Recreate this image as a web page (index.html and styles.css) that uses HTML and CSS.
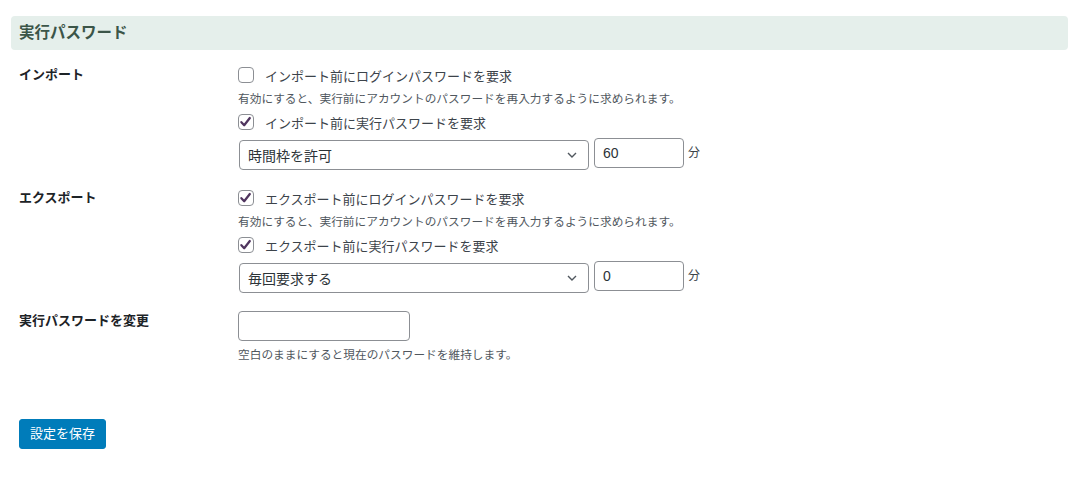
FILE: index.html
```html
<!DOCTYPE html>
<html lang="ja">
<head>
<meta charset="utf-8">
<link rel="stylesheet" href="styles.css">
</head>
<body>
<div class="page">
  <h2 class="section-title">実行パスワード</h2>

  <div class="form-row first">
    <div class="label">インポート</div>
    <div class="field">
      <div class="check-line">
        <span class="cb"></span>
        <span class="cb-text">インポート前にログインパスワードを要求</span>
      </div>
      <div class="help">有効にすると、実行前にアカウントのパスワードを再入力するように求められます。</div>
      <div class="check-line">
        <span class="cb checked"><svg viewBox="0 0 16 16" width="16" height="16"><path d="M3.6 8.2 L6.6 11.4 L12.6 3.8" fill="none" stroke="#50355f" stroke-width="2.4" stroke-linecap="round" stroke-linejoin="round"/></svg></span>
        <span class="cb-text">インポート前に実行パスワードを要求</span>
      </div>
      <div class="select-row">
        <div class="select"><span>時間枠を許可</span><svg viewBox="0 0 16 16" width="16" height="16"><path d="M4 6 L8 10 L12 6" fill="none" stroke="#50575e" stroke-width="1.4"/></svg></div>
        <div class="num">60</div>
        <span class="unit">分</span>
      </div>
    </div>
  </div>

  <div class="form-row">
    <div class="label">エクスポート</div>
    <div class="field">
      <div class="check-line">
        <span class="cb checked"><svg viewBox="0 0 16 16" width="16" height="16"><path d="M3.6 8.2 L6.6 11.4 L12.6 3.8" fill="none" stroke="#50355f" stroke-width="2.4" stroke-linecap="round" stroke-linejoin="round"/></svg></span>
        <span class="cb-text">エクスポート前にログインパスワードを要求</span>
      </div>
      <div class="help">有効にすると、実行前にアカウントのパスワードを再入力するように求められます。</div>
      <div class="check-line">
        <span class="cb checked"><svg viewBox="0 0 16 16" width="16" height="16"><path d="M3.6 8.2 L6.6 11.4 L12.6 3.8" fill="none" stroke="#50355f" stroke-width="2.4" stroke-linecap="round" stroke-linejoin="round"/></svg></span>
        <span class="cb-text">エクスポート前に実行パスワードを要求</span>
      </div>
      <div class="select-row">
        <div class="select"><span>毎回要求する</span><svg viewBox="0 0 16 16" width="16" height="16"><path d="M4 6 L8 10 L12 6" fill="none" stroke="#50575e" stroke-width="1.4"/></svg></div>
        <div class="num">0</div>
        <span class="unit">分</span>
      </div>
    </div>
  </div>

  <div class="form-row">
    <div class="label">実行パスワードを変更</div>
    <div class="field">
      <div class="text-input"></div>
      <div class="help help-after">空白のままにすると現在のパスワードを維持します。</div>
    </div>
  </div>

  <div class="actions">
    <button class="btn">設定を保存</button>
  </div>
</div>
</body>
</html>
```

FILE: styles.css
```css
* { box-sizing: border-box; }
body {
  margin: 0;
  background: #fff;
  font-family: "Liberation Sans", "Noto Sans CJK JP", sans-serif;
  color: #1d2327;
}
.page {
  padding: 16px 11px 0 11px;
}
.section-title {
  margin: 0;
  height: 34px;
  background: #e5efeb;
  border-radius: 4px;
  padding: 0 8px;
  font-size: 15.5px;
  line-height: 34px;
  font-weight: 700;
  color: #3b5548;
}
.form-row {
  display: grid;
  grid-template-columns: 219px 1fr;
  padding-left: 8px;
  margin-top: 16px;
}
.form-row.first { margin-top: 13px; }
.label {
  font-size: 13px;
  font-weight: 700;
  line-height: 24px;
  color: #1d2327;
}
.check-line {
  display: flex;
  align-items: center;
  height: 24px;
}
.cb {
  width: 16px;
  height: 16px;
  border: 1px solid #8c8f94;
  border-radius: 4px;
  background: #fff;
  display: flex;
  align-items: center;
  justify-content: center;
  margin-right: 11px;
  flex: none;
}
.cb svg { display: block; margin-left: -1px; }
.cb-text {
  font-size: 13px;
  color: #3c434a;
}
.help {
  font-size: 11.7px;
  line-height: 23px;
  color: #50575e;
}
.select-row {
  display: flex;
  align-items: flex-start;
  margin-top: 4px;
}
.select {
  width: 350px;
  height: 30px;
  margin-top: 2px;
  margin-left: 1px;
  border: 1px solid #8c8f94;
  border-radius: 4px;
  display: flex;
  align-items: center;
  justify-content: space-between;
  padding: 0 8px 0 8px;
  font-size: 14px;
  color: #2c3338;
}
.num {
  width: 90px;
  height: 30px;
  margin-left: 5px;
  border: 1px solid #8c8f94;
  border-radius: 4px;
  padding: 0 8px;
  font-size: 14px;
  line-height: 28px;
  color: #2c3338;
}
.unit {
  font-size: 12px;
  line-height: 30px;
  margin-left: 4px;
  color: #3c434a;
}
.text-input {
  width: 172px;
  height: 30px;
  margin-top: 2px;
  border: 1px solid #8c8f94;
  border-radius: 4px;
}
.help-after { margin-top: 2px; }
.actions {
  padding-left: 8px;
  margin-top: 53px;
}
.btn {
  font-family: "Liberation Sans", "Noto Sans CJK JP", sans-serif;
  background: #007cba;
  border: 1px solid #007cba;
  border-radius: 3px;
  color: #fff;
  font-size: 13px;
  height: 30px;
  width: 87px;
  padding: 0;
  line-height: 28px;
}
```
